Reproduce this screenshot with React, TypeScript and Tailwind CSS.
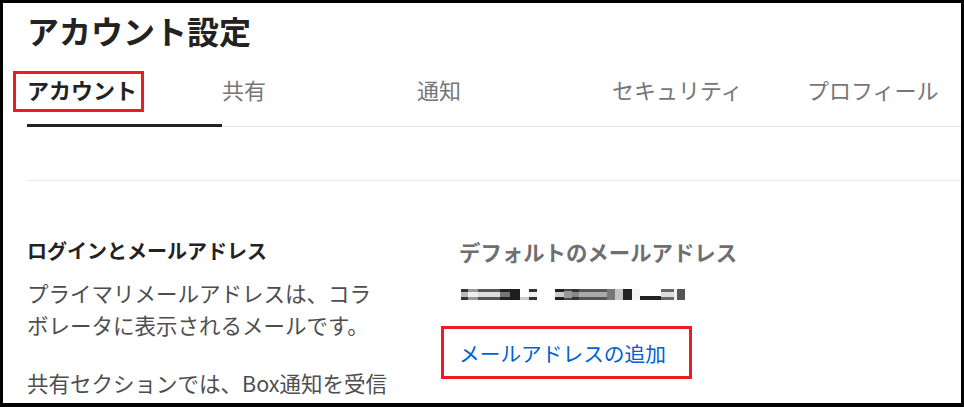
import React from 'react';

const tabs = ['アカウント', '共有', '通知', 'セキュリティ', 'プロフィール'];

// pixelated (blurred) email address
const emailBlocks: string[] = [
  'w-[7px] border-y-[3px] border-[#333] bg-[#bbb]',
  'w-[10px] border-y-[3px] border-[#999] bg-[#eee]',
  'w-[22px] border-y-[3px] border-[#555] bg-[#ddd]',
  'w-[10px] border-y-[3px] border-[#222] bg-[#777]',
  'w-[10px] bg-[#1e1e1e]',
  'w-[9px] border-b-[3px] border-[#ccc] bg-white',
  'w-[8px] border-y-[3px] border-[#333] bg-[#eee]',
  'w-[18px] bg-white',
  'w-[9px] border-y-[3px] border-[#222] bg-[#ccc]',
  'w-[8px] border-y-[2px] border-[#444] bg-[#999]',
  'w-[7px] border-y-[3px] border-[#333] bg-[#888]',
  'w-[28px] border-y-[3px] border-[#555] bg-[#aaa]',
  'w-[8px] bg-[#777]',
  'w-[8px] bg-[#c4c4c4]',
  'w-[9px] bg-[#222]',
  'w-[8px] bg-[#f2f2f2]',
  'w-[21px] border-b-[4px] border-[#222] bg-white',
  'w-[13px] border-y-[3px] border-[#666] bg-[#ddd]',
  'w-[3px] bg-[#eee]',
  'w-[8px] bg-[#555]',
];

export default function App() {
  return (
    <div className="h-[407px] w-[964px] overflow-hidden border-[3px] border-b-4 border-black bg-white font-['Noto_Sans_CJK_JP',sans-serif]">
      <div className="pl-6">
        <h1 className="pt-[11px] text-[32px] font-bold leading-none text-[#222]">アカウント設定</h1>

        {/* Tabs */}
        <div className="mt-[32px] flex border-b border-[#e8e8e8]">
          {tabs.map((tab, i) => (
            <div
              key={tab}
              className={
                i === 0
                  ? 'relative -mb-px w-[195px] shrink-0 border-b-[3px] border-[#222] pb-[24px] text-[22px] font-bold leading-none text-[#222]'
                  : 'relative -mb-px w-[195px] shrink-0 border-b-[3px] border-transparent pb-[24px] text-[22px] leading-none text-[#767676]'
              }
            >
              {i === 0 ? (
                <span className="relative">
                  {tab}
                  <span className="absolute -bottom-[7px] -left-[14px] -right-[7px] -top-[2px] border-[3px] border-[#ed1c24]" />
                </span>
              ) : (
                tab
              )}
            </div>
          ))}
        </div>

        <div className="h-[54px] border-b border-[#e8e8e8]" />

        {/* Login & email */}
        <div className="flex pt-[60px]">
          <div className="w-[432px] shrink-0">
            <h2 className="text-[20px] font-bold leading-none text-[#222]">ログインとメールアドレス</h2>
            <p className="mt-[16px] whitespace-nowrap text-[21.5px] leading-[32px] text-[#4e4e4e]">
              プライマリメールアドレスは、コラ
              <br />
              ボレータに表示されるメールです。
            </p>
            <p className="mt-[26px] whitespace-nowrap text-[21.5px] leading-[32px] text-[#4e4e4e]">
              共有セクションでは、Box通知を受信
            </p>
          </div>

          <div className="flex-1">
            <h2 className="text-[21.4px] font-bold leading-none text-[#6f6f6f]">デフォルトのメールアドレス</h2>
            <div className="mt-[27px] flex h-[11px] pl-[2px]">
              {emailBlocks.map((cls, i) => (
                <span key={i} className={cls} />
              ))}
            </div>
            <div className="mt-[43px]">
              <a href="#" className="relative text-[20.7px] leading-none text-[#0061d5]">
                メールアドレスの追加
                <span className="absolute -bottom-[11px] -left-[18px] -right-[26px] -top-[12px] border-[3px] border-[#ed1c24]" />
              </a>
            </div>
          </div>
        </div>
      </div>
    </div>
  );
}
